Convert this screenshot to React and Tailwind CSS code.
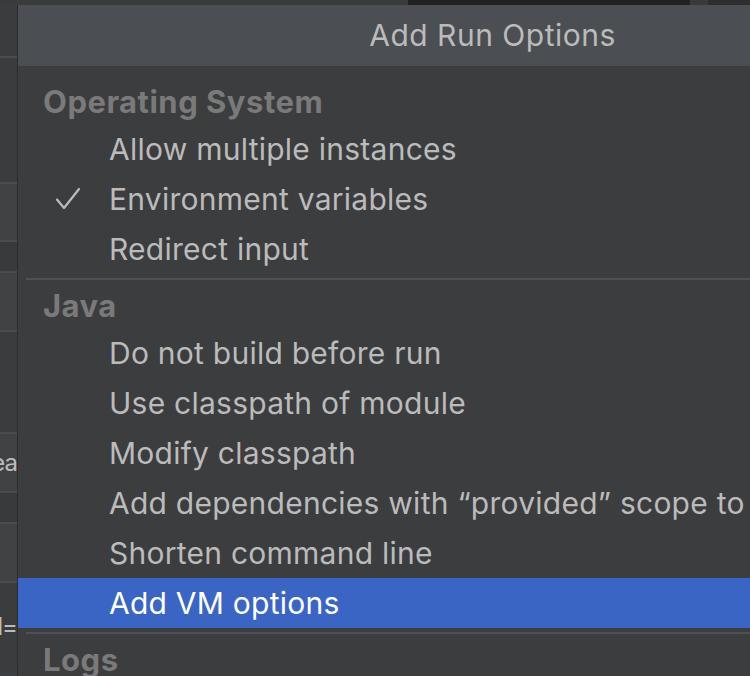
import React from 'react';

const sections = [
   {
      title: 'Operating System',
      items: [
         { label: 'Allow multiple instances' },
         { label: 'Environment variables', checked: true },
         { label: 'Redirect input' },
      ],
   },
   {
      title: 'Java',
      items: [
         { label: 'Do not build before run' },
         { label: 'Use classpath of module' },
         { label: 'Modify classpath' },
         { label: 'Add dependencies with \u201cprovided\u201d scope to classpath' },
         { label: 'Shorten command line' },
         { label: 'Add VM options', active: true },
      ],
   },
   { title: 'Logs', items: [] },
];

const CheckIcon = () => (
   <svg width="26" height="24" viewBox="0 0 26 24" fill="none" className="shrink-0">
      <path d="M2 12.5 L9 21 L24 2" stroke="#bbbbbb" strokeWidth="2.2" strokeLinecap="round" strokeLinejoin="round" />
   </svg>
);

// left side of the dialog behind the popup
const BackStrip = () => {
   const bands = [
      ['h-[51px]', 'bg-[#3b3c3e]', ''],
      ['h-[126px]', 'bg-[#3b3c3e]', ''],
      ['h-[58px]', 'bg-[#404243]', ''],
      ['h-[31px]', 'bg-[#393a3c]', ''],
      ['h-[59px]', 'bg-[#404243]', ''],
      ['h-[102px]', 'bg-[#3b3c3e]', ''],
      ['h-[59px]', 'bg-[#404243]', 'ea'],
      ['h-[31px]', 'bg-[#393a3c]', ''],
      ['h-[59px]', 'bg-[#404243]', ''],
      ['h-[90px]', 'bg-[#3b3c3e]', 'd='],
   ];
   return (
      <div className="w-[17px] shrink-0 flex flex-col overflow-hidden">
         {bands.map(([h, bg, txt], i) => (
            <div key={i} className={`${h} ${bg} shrink-0 border-t-2 border-[#4a4c4e] first:border-t-0 flex items-center justify-end overflow-hidden`}>
               {txt && <span className="text-[24px] leading-none text-[#bbbbbb] whitespace-nowrap tracking-[-1px]">{txt}</span>}
            </div>
         ))}
      </div>
   );
};

const Row = ({ item }) => (
   <div className={`h-[50px] flex items-center shrink-0 ${item.active ? 'bg-[#3b65c4] text-white' : 'text-[#bbbbbb]'}`}>
      <div className="w-[91px] shrink-0 pl-[37px] flex items-center">{item.checked && <CheckIcon />}</div>
      <span className="whitespace-nowrap">{item.label}</span>
   </div>
);

export default function App() {
   return (
      <div className="w-[750px] h-[676px] overflow-hidden bg-[#3c3f41] flex flex-col" style={{ fontFamily: 'Inter, "Noto Sans", sans-serif' }}>
         <div className="h-[5px] shrink-0 flex">
            <div className="w-[408px] bg-[#3a3b3d]" />
            <div className="w-[282px] bg-[#222222]" />
            <div className="w-[18px] bg-[#3a3a3a]" />
            <div className="flex-1 bg-[#2e2e2e]" />
         </div>
         <div className="flex flex-1 min-h-0">
            <BackStrip />
            <div className="w-[950px] shrink-0 border-l border-[#2b2b2b] bg-[#3c3d3f] flex flex-col text-[30px] tracking-[0.25px]">
               <div className="h-[61px] shrink-0 bg-[#4b4e52] flex items-center justify-center text-[#bbbbbb] tracking-[0.5px]">Add Run Options</div>
               <div className="pt-[14px] flex flex-col">
                  {sections.map((s, i) => (
                     <div key={s.title} className="flex flex-col">
                        {i > 0 && (
                           <div className="h-[10px] flex items-center pl-[8px]">
                              <div className="h-[2px] flex-1 bg-[#4e5053]" />
                           </div>
                        )}
                        <div className="h-[44px] flex items-center pl-[25px] font-bold text-[31px] tracking-[0.5px] text-[#7a7a7a]">{s.title}</div>
                        {s.items.map(item => (
                           <Row key={item.label} item={item} />
                        ))}
                     </div>
                  ))}
               </div>
            </div>
         </div>
      </div>
   );
}
